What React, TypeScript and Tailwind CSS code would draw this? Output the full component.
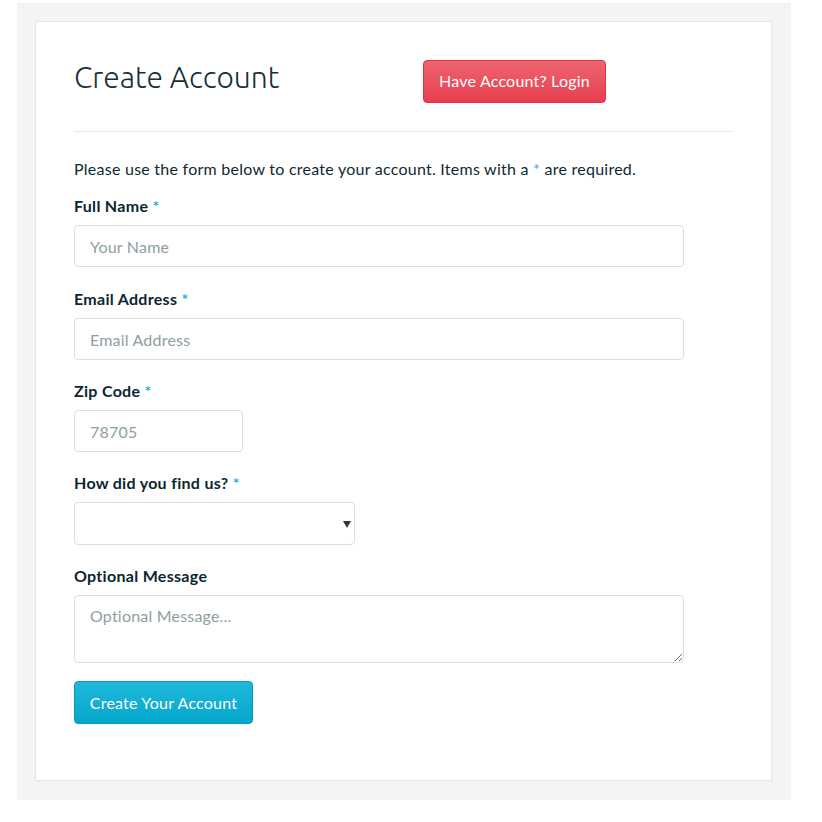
import React from "react";

const Star = () => <span className="text-[#1eb3df]">*</span>;

const labelCls = "block text-[16px] font-bold leading-6 tracking-[0.3px] text-[#0b2630]";
const inputCls =
  "mt-[7px] block h-[42px] rounded-[4px] border border-[#dadfe0] px-[15px] text-[16px] tracking-[0.2px] placeholder:text-[#8e9ea2] outline-none";

export default function App() {
  return (
    <div className="min-h-[822px] bg-white pt-[3px] pl-[17px] font-['Lato','Noto_Sans',sans-serif] text-[#0f2a32]">
      <div className="w-[774px] bg-[#f3f4f3] p-[18px] pb-[19px]">
        <div className="h-[760px] w-[737px] border border-[#e4e7e6] bg-white pl-[38px] pt-[38px]">
          <div className="flex h-[42px] items-center">
            <h1 className="w-[349px] font-['Ubuntu','Lato',sans-serif] text-[30px] font-light leading-none text-[#163038] -mt-[8px]">
              Create Account
            </h1>
            <button className="h-[43px] w-[183px] rounded-[4px] border border-[#dc3443] bg-gradient-to-b from-[#ef6370] to-[#e63e4e] text-[16px] tracking-[0.2px] text-white">
              Have Account? Login
            </button>
          </div>
          <div className="mt-[29px] h-px w-[659px] bg-[#e8eaea]" />
          <p className="mt-[25px] text-[16px] leading-6 tracking-[0.25px]">
            Please use the form below to create your account. Items with a <Star /> are required.
          </p>

          <label className={`mt-[13px] ${labelCls}`}>
            Full Name <Star />
          </label>
          <input placeholder="Your Name" className={`${inputCls} w-[610px]`} />

          <label className={`mt-[20px] ${labelCls}`}>
            Email Address <Star />
          </label>
          <input placeholder="Email Address" className={`${inputCls} w-[610px]`} />

          <label className={`mt-[19px] ${labelCls}`}>
            Zip Code <Star />
          </label>
          <input placeholder="78705" className={`${inputCls} w-[169px]`} />

          <label className={`mt-[19px] ${labelCls}`}>
            How did you find us? <Star />
          </label>
          <div className="relative mt-[7px] h-[43px] w-[281px] rounded-[4px] border border-[#dadfe0]">
            <svg className="absolute right-[3px] top-[18px]" width="8" height="7" viewBox="0 0 8 7">
              <path d="M0 0 L8 0 L4 7 Z" fill="#2c3a3e" />
            </svg>
          </div>

          <label className={`mt-[19px] ${labelCls}`}>Optional Message</label>
          <textarea
            placeholder="Optional Message..."
            className="mt-[7px] block h-[68px] w-[610px] rounded-[4px] border border-[#dadfe0] px-[15px] py-[8px] text-[16px] tracking-[0.2px] placeholder:text-[#8e9ea2] outline-none"
          />

          <button className="mt-[18px] h-[43px] w-[179px] rounded-[4px] border border-[#0b95b8] bg-gradient-to-b from-[#1dbadc] to-[#04a5cb] text-[16px] tracking-[0.2px] text-white">
            Create Your Account
          </button>
        </div>
      </div>
    </div>
  );
}
